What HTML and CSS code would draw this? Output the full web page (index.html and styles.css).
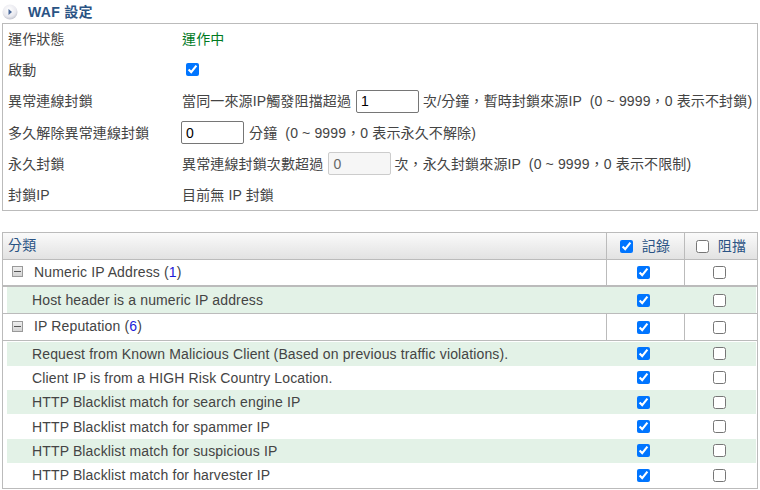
FILE: index.html
```html
<!DOCTYPE html>
<html lang="zh-Hant">
<head>
<meta charset="utf-8">
<title>WAF 設定</title>
<link rel="stylesheet" href="styles.css">
</head>
<body>
<div class="title">
  <svg class="bullet" width="18" height="18" viewBox="0 0 18 18"><defs><radialGradient id="b" cx="45%" cy="35%" r="65%"><stop offset="0" stop-color="#ffffff"/><stop offset="0.7" stop-color="#e9e9ef"/><stop offset="1" stop-color="#c4c6d0"/></radialGradient></defs><circle cx="9" cy="9" r="7.5" fill="url(#b)"/><path d="M7.5 6 L11 9 L7.5 12 Z" fill="#4a6a9c"/></svg>
  <h1>WAF 設定</h1>
</div>
<div class="settings">
  <div class="row"><span class="label">運作狀態</span><span class="value green">運作中</span></div>
  <div class="row"><span class="label">啟動</span><span class="value"><input type="checkbox" class="cb start" checked></span></div>
  <div class="row"><span class="label">異常連線封鎖</span><span class="value">當同一來源IP觸發阻擋超過<input class="num" type="text" value="1">次/分鐘，暫時封鎖來源IP &nbsp;(0 ~ 9999，0 表示不封鎖)</span></div>
  <div class="row"><span class="label">多久解除異常連線封鎖</span><span class="value"><input class="num first" type="text" value="0">分鐘 &nbsp;(0 ~ 9999，0 表示永久不解除)</span></div>
  <div class="row"><span class="label">永久封鎖</span><span class="value">異常連線封鎖次數超過<input class="num" type="text" value="0" disabled>次，永久封鎖來源IP &nbsp;(0 ~ 9999，0 表示不限制)</span></div>
  <div class="row"><span class="label">封鎖IP</span><span class="value">目前無 IP 封鎖</span></div>
</div>
<div class="rules">
  <div class="head">
    <div class="name">分類</div>
    <div class="col"><input type="checkbox" class="cb" checked><span>記錄</span></div>
    <div class="col"><input type="checkbox" class="cb"><span>阻擋</span></div>
  </div>
  <div class="group thick">
    <div class="name"><span class="minus"></span>Numeric IP Address <span class="paren">(<b>1</b>)</span></div>
    <div class="col"><input type="checkbox" class="cb" checked></div>
    <div class="col"><input type="checkbox" class="cb"></div>
  </div>
  <div class="items single">
    <div class="item odd"><div class="name">Host header is a numeric IP address</div><div class="col"><input type="checkbox" class="cb" checked></div><div class="col"><input type="checkbox" class="cb"></div></div>
  </div>
  <div class="group">
    <div class="name"><span class="minus"></span>IP Reputation <span class="paren">(<b>6</b>)</span></div>
    <div class="col"><input type="checkbox" class="cb" checked></div>
    <div class="col"><input type="checkbox" class="cb"></div>
  </div>
  <div class="items list">
    <div class="item odd"><div class="name">Request from Known Malicious Client (Based on previous traffic violations).</div><div class="col"><input type="checkbox" class="cb" checked></div><div class="col"><input type="checkbox" class="cb"></div></div>
    <div class="item"><div class="name">Client IP is from a HIGH Risk Country Location.</div><div class="col"><input type="checkbox" class="cb" checked></div><div class="col"><input type="checkbox" class="cb"></div></div>
    <div class="item odd"><div class="name">HTTP Blacklist match for search engine IP</div><div class="col"><input type="checkbox" class="cb" checked></div><div class="col"><input type="checkbox" class="cb"></div></div>
    <div class="item"><div class="name">HTTP Blacklist match for spammer IP</div><div class="col"><input type="checkbox" class="cb" checked></div><div class="col"><input type="checkbox" class="cb"></div></div>
    <div class="item odd"><div class="name">HTTP Blacklist match for suspicious IP</div><div class="col"><input type="checkbox" class="cb" checked></div><div class="col"><input type="checkbox" class="cb"></div></div>
    <div class="item"><div class="name">HTTP Blacklist match for harvester IP</div><div class="col"><input type="checkbox" class="cb" checked></div><div class="col"><input type="checkbox" class="cb"></div></div>
  </div>
</div>
</body>
</html>
```

FILE: styles.css
```css
* { box-sizing: border-box; }
html, body { height: 490px; overflow: hidden; }
body {
  margin: 0;
  padding: 0 2px;
  background: #fff;
  color: #444;
  font: 14px/20px "Liberation Sans", "Noto Sans CJK TC", sans-serif;
  letter-spacing: 0.14px;
}
.title {
  height: 23px;
  display: flex;
  align-items: center;
  gap: 9px;
}
.bullet { margin-left: -1px; flex: none; }
.title h1 {
  margin: 1px 0 0;
  font-size: 14px;
  font-weight: bold;
  color: #2a5384;
  letter-spacing: 0.3px;
}
.settings {
  width: 756px;
  height: 188px;
  border: 1px solid #bbb;
  padding: 0 5px;
}
.row {
  height: 31.3px;
  display: flex;
  align-items: center;
  white-space: nowrap;
}
.row:first-child { margin-top: -1px; }
.label { width: 174px; flex: none; }
.value { display: flex; align-items: center; white-space: pre; }
.green { color: #007a1f; }
.num {
  width: 63px;
  height: 23px;
  margin: 0 4px 0 5px;
  padding: 0 4px;
  border: 1px solid #767676;
  border-radius: 2px;
  font: 14px "Liberation Sans", sans-serif;
  color: #000;
  background: #fff;
}
.num.first { margin: 0 5px 0 -1px; }
.num:disabled { background: #f6f6f6; border-color: #ccc; color: #666; margin-right: 3px; }
.cb {
  width: 13px;
  height: 13px;
  margin: 0;
  accent-color: #0075ff;
}
.start { margin-left: 4px; }
.rules {
  width: 756px;
  height: 257px;
  margin-top: 21px;
  border: 1px solid #bbb;
}
.head, .group, .item { display: grid; grid-template-columns: 1fr 78px 73px; align-items: center; }
.head {
  height: 27px;
  background: linear-gradient(#fafafa, #e2e2e2);
  border-bottom: 1px solid #bbb;
  color: #2a5384;
}
.head .name { padding: 0 0 2px 5px; }
.head .col { gap: 9px; }
.head .col span { padding-bottom: 1px; }
.col {
  height: 100%;
  display: flex;
  align-items: center;
  justify-content: center;
}
.head .col:nth-child(2) { padding-right: 1px; }
.group { height: 27px; border-bottom: 1px solid #bbb; }
.group .name { padding: 0 0 2px 5px; display: flex; align-items: center; white-space: pre; }
.head .col, .group .col { border-left: 1px solid #bbb; }
.group .col:nth-child(2) { padding-right: 5px; }
.group .col:nth-child(3) { padding-right: 4px; }
.minus {
  width: 11px;
  height: 11px;
  margin: 0 11px 0 4px;
  border: 1px solid #999;
  background: linear-gradient(#eeeeee, #d4d4d4);
  position: relative;
}
.minus::after {
  content: "";
  position: absolute;
  left: 1px;
  right: 1px;
  top: 4px;
  height: 1px;
  background: #555;
}
.paren b { font-weight: normal; color: #1c1cd8; }
.group.thick { border-bottom-width: 2px; }
.items { padding-left: 4px; }
.items.single { height: 27px; border-bottom: 1px solid #bbb; padding-bottom: 1px; }
.items.single .item { height: 26px; }
.items .item { grid-template-columns: 1fr 77px 73px; margin-right: 1px; }
.items.list { padding-top: 0.5px; }
.items.list .item { height: 24.3px; }
.item .col:nth-child(2) { padding-right: 3px; }
.item .name { padding-left: 25px; white-space: nowrap; }
.odd { background: #e3f2e7; }
```
